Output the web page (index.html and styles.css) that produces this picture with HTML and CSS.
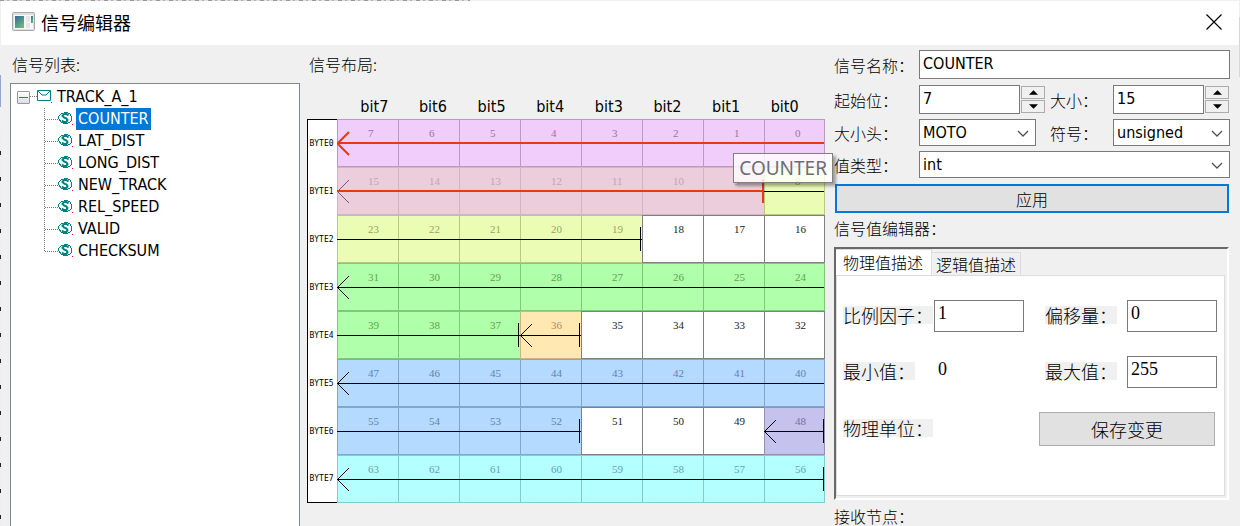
FILE: index.html
```html
<!DOCTYPE html>
<html lang="zh-CN">
<head>
<meta charset="utf-8">
<title>信号编辑器</title>
<link rel="stylesheet" href="styles.css">
</head>
<body>
<svg class="defs" aria-hidden="true">
  <symbol id="coin" viewBox="0 0 30 22"><path d="M1 11.500H14" class="dots"/><path d="M17 5.500h2M20 4.500h4M24 5.500h2M26.500 6v2M27.500 8v5M26.500 13v1M24 14.500h2M19 15.500h5M17 14.500h2M16.500 12v2M14.500 8v3M15.500 7v1M15.500 11v2M16.500 6v1" class="teal"/><path d="M24.500 7.500L22.500 6H20L18.500 8L20 9.500L22.500 10.500L23.500 12L22.500 14H19.500L18 12.500" class="teal bold"/><path d="M28 16h1v1h-1z" fill="#f00"/></symbol>
  <symbol id="sig" viewBox="0 0 30 22"><path d="M0.500 0V22" class="dots"/><use href="#coin" width="30" height="22"/></symbol>
  <symbol id="sig-last" viewBox="0 0 30 22"><path d="M0.500 0V12" class="dots"/><use href="#coin" width="30" height="22"/></symbol>
  <symbol id="head" viewBox="0 0 13 25"><path d="M12 1L0.500 12.500L12 24" fill="none" stroke="currentColor"/></symbol>
  <symbol id="chev" viewBox="0 0 12 8"><path d="M1 1L6 6L11 1" fill="none" stroke="#505050" stroke-width="1.300"/></symbol>
  <symbol id="up" viewBox="0 0 10 5"><path d="M0 5L5 0L10 5z"/></symbol>
  <symbol id="down" viewBox="0 0 10 5"><path d="M0 0L5 5L10 0z"/></symbol>
</svg>
<div class="window">
  <header class="titlebar">
    <svg class="app-icon" viewBox="0 0 24 20" aria-hidden="true"><defs><linearGradient id="g" x2="0.600" y2="1"><stop stop-color="#3468a0"/><stop offset="1" stop-color="#64b878"/></linearGradient></defs><rect x="0.500" y="0.500" width="22" height="18" rx="1" fill="#dedede" stroke="#a6aaae"/><path d="M2 3h19v14H2z" fill="#f7f7f7"/><path d="M3 4h9v12H3z" fill="url(#g)"/><path d="M14 4h4v6h-4zM14 11h4v5h-4z" fill="#e6e6e6"/><path d="M19 4h2v7h-2z" fill="url(#g)"/></svg>
    <h1>信号编辑器</h1>
    <button class="close" aria-label="关闭"><svg viewBox="0 0 16 16"><path d="M0.500 0.500L15.500 15.500M15.500 0.500L0.500 15.500" stroke="#000" stroke-width="1.200"/></svg></button>
  </header>
  <main>
    <section class="signals">
      <h2>信号列表:</h2>
      <div class="tree">
        <div class="root"><button class="toggle" aria-label="折叠"></button><svg class="root-icon" viewBox="0 0 22 16" aria-hidden="true"><path d="M0 7.500H7" class="dots"/><path d="M7.500 1.500h13v10h-13zM8 2l4 4h4l4 -4" class="teal"/><path d="M21 13h1v1h-1z" fill="#f00"/></svg><span>TRACK_A_1</span></div>
        <ul>
          <li><svg><use href="#sig"/></svg><span class="selected">COUNTER</span></li>
          <li><svg><use href="#sig"/></svg><span>LAT_DIST</span></li>
          <li><svg><use href="#sig"/></svg><span>LONG_DIST</span></li>
          <li><svg><use href="#sig"/></svg><span>NEW_TRACK</span></li>
          <li><svg><use href="#sig"/></svg><span>REL_SPEED</span></li>
          <li><svg><use href="#sig"/></svg><span>VALID</span></li>
          <li><svg><use href="#sig-last"/></svg><span>CHECKSUM</span></li>
        </ul>
      </div>
    </section>
    <section class="layout">
      <h2>信号布局:</h2>
      <div class="bits"><span>bit7</span><span>bit6</span><span>bit5</span><span>bit4</span><span>bit3</span><span>bit2</span><span>bit1</span><span>bit0</span></div>
      <div class="board">
        <table>
          <tbody>
          <tr class="active"><th scope="row">BYTE0</th><td class="pink">7<svg class="head"><use href="#head"/></svg></td><td class="pink">6</td><td class="pink">5</td><td class="pink">4</td><td class="pink">3</td><td class="pink">2</td><td class="pink">1</td><td class="pink">0</td></tr>
          <tr><th scope="row">BYTE1</th><td class="rose">15<svg class="head"><use href="#head"/></svg></td><td class="rose">14</td><td class="rose">13</td><td class="rose">12</td><td class="rose">11</td><td class="rose">10</td><td class="rose">9<i class="stop"></i></td><td class="lime">8</td></tr>
          <tr><th scope="row">BYTE2</th><td class="lime">23</td><td class="lime">22</td><td class="lime">21</td><td class="lime">20</td><td class="lime">19<i class="stop"></i></td><td>18</td><td>17</td><td>16</td></tr>
          <tr><th scope="row">BYTE3</th><td class="green">31<svg class="head"><use href="#head"/></svg></td><td class="green">30</td><td class="green">29</td><td class="green">28</td><td class="green">27</td><td class="green">26</td><td class="green">25</td><td class="green">24</td></tr>
          <tr><th scope="row">BYTE4</th><td class="green">39</td><td class="green">38</td><td class="green">37<i class="stop"></i></td><td class="amber">36<svg class="head"><use href="#head"/></svg><i class="stop"></i></td><td>35</td><td>34</td><td>33</td><td>32</td></tr>
          <tr><th scope="row">BYTE5</th><td class="blue">47<svg class="head"><use href="#head"/></svg></td><td class="blue">46</td><td class="blue">45</td><td class="blue">44</td><td class="blue">43</td><td class="blue">42</td><td class="blue">41</td><td class="blue">40</td></tr>
          <tr><th scope="row">BYTE6</th><td class="blue">55</td><td class="blue">54</td><td class="blue">53</td><td class="blue">52<i class="stop"></i></td><td>51</td><td>50</td><td>49</td><td class="violet">48<svg class="head"><use href="#head"/></svg><i class="stop"></i></td></tr>
          <tr><th scope="row">BYTE7</th><td class="cyan">63<svg class="head"><use href="#head"/></svg></td><td class="cyan">62</td><td class="cyan">61</td><td class="cyan">60</td><td class="cyan">59</td><td class="cyan">58</td><td class="cyan">57</td><td class="cyan">56<i class="stop"></i></td></tr>
          </tbody>
        </table>
        <div class="tooltip" role="tooltip">COUNTER</div>
      </div>
    </section>
    <section class="details">
      <form class="form">
        <label for="name">信号名称：</label>
        <input id="name" class="wide" value="COUNTER">
        <label for="start">起始位：</label>
        <div class="spin spaced"><input id="start" value="7"><div class="steps"><button type="button" aria-label="增加"><svg><use href="#up"/></svg></button><button type="button" aria-label="减少"><svg><use href="#down"/></svg></button></div></div>
        <label for="size">大小：</label>
        <div class="spin"><input id="size" value="15"><div class="steps"><button type="button" aria-label="增加"><svg><use href="#up"/></svg></button><button type="button" aria-label="减少"><svg><use href="#down"/></svg></button></div></div>
        <label for="endian">大小头：</label>
        <div class="combo inset"><select id="endian"><option>MOTO</option></select><svg><use href="#chev"/></svg></div>
        <label for="sign">符号：</label>
        <div class="combo"><select id="sign"><option>unsigned</option></select><svg><use href="#chev"/></svg></div>
        <label for="type">值类型：</label>
        <div class="combo wide"><select id="type"><option>int</option></select><svg><use href="#chev"/></svg></div>
        <button type="button" class="apply">应用</button>
      </form>
      <h2 class="editor-title">信号值编辑器：</h2>
      <div class="panel">
        <div class="tabs" role="tablist"><button role="tab" aria-selected="true">物理值描述</button><button role="tab" aria-selected="false">逻辑值描述</button></div>
        <div class="sheet">
          <label for="factor"><span>比例因子：</span></label><input id="factor" value="1">
          <label for="offset"><span>偏移量：</span></label><input id="offset" value="0">
          <label for="min"><span>最小值：</span></label><output id="min">0</output>
          <label for="max"><span>最大值：</span></label><input id="max" value="255">
          <label class="unit"><span>物理单位：</span></label>
          <button class="save">保存变更</button>
        </div>
      </div>
      <h2 class="nodes">接收节点：</h2>
    </section>
  </main>
</div>
</body>
</html>
```

FILE: styles.css
```css
* { box-sizing: border-box; }
html { height: 100%; background: #f0f0f0; }
body {
  margin: 0;
  height: 100%;
  overflow: hidden;
  padding: 1px 1px 0;
  color: #000;
  font: 16px/22px "DejaVu Sans Condensed", "Noto Sans", "Noto Sans CJK SC", sans-serif;
  background:
    repeating-linear-gradient(90deg, #999 0 4px, #ddd 4px 7px, #b8b0a8 7px 9px, #ddd 9px 13px) 0 0 / 470px 1px no-repeat,
    linear-gradient(#8fa8d0, #8fa8d0) 0 75px / 1px 32px no-repeat,
    repeating-linear-gradient(#eee 0 21px, #222 21px 25px, #eee 25px 26px) 0 130px / 1px 400px no-repeat,
    linear-gradient(#d8d8d8, #d8d8d8) 100% 17px / 1px 60px no-repeat,
    #f0f0f0;
}
button, input, select { font: inherit; color: inherit; margin: 0; border-radius: 0; min-width: 0; }
h1, h2 { margin: 0; font-weight: 300; }
h2 { font-size: 16px; line-height: 22px; }
h2, .form label, .apply, .tabs button { font-family: "Noto Sans CJK SC", sans-serif; font-weight: 300; }
.defs { position: absolute; width: 0; height: 0; }
.dots { fill: none; stroke: #777; stroke-dasharray: 1 1; }
.teal { fill: none; stroke: #008080; }
.bold { stroke-width: 2px; }

.window { min-height: 100%; background: #f0f0f0; }
.titlebar { display: flex; align-items: center; height: 44px; padding: 0 17px 2px 11px; background: #fff; }
.app-icon { width: 24px; height: 20px; margin-right: 5px; }
h1 { flex: 1; font: 400 18px/24px "Noto Sans CJK SC", sans-serif; }
.close { display: flex; padding: 0; border: 0; background: none; }
.close svg { width: 16px; height: 16px; }

main { display: grid; grid-template-columns: 290fr 518fr 398fr; gap: 7px; padding: 0 9px; }
section { min-width: 0; }

.signals { display: flex; flex-direction: column; }
.signals h2, .layout h2 { padding: 8px 2px; }
.tree { flex: 1; background: #fff; border: 1px solid #828790; border-bottom: 0; padding: 2px 0 0 6px; }
.root { display: flex; align-items: center; height: 22px; }
.root span { padding-left: 5px; }
.toggle { width: 13px; height: 13px; padding: 0; border: 1px solid #999; border-radius: 1px; background: linear-gradient(#4b63a7, #4b63a7) center / 9px 1px no-repeat, linear-gradient(#fff, #ddd); }
.root-icon { width: 22px; height: 16px; }
.tree ul { list-style: none; margin: 0; padding: 0 0 0 27px; }
.tree li { display: flex; align-items: center; height: 22px; }
.tree li svg { width: 30px; height: 22px; }
.tree li span { margin-left: 2px; padding: 0 2px; }
.tree .selected { background: #0078d7; color: #fff; }

.bits { display: flex; padding: 13px 11px 1px 38px; }
.bits span { flex: 1; text-align: center; }
.board { position: relative; }
table { width: 100%; table-layout: fixed; border-spacing: 0; border: 1px solid #000; border-width: 0 0 0 1px; font: 11px/11px "Liberation Serif", serif; }
th, td { height: 48px; padding: 0; text-align: left; }
th { width: 29px; background: #fff; font: 8px/11px "DejaVu Sans Mono", monospace; text-align: center; padding-right: 2px; }
tr:first-child th { border-top: 1px solid #000; }
tr:last-child th { border-bottom: 1px solid #000; }
td { --edge: #808080; --ink: #222; position: relative; vertical-align: top; padding: 8px 0 0 30px; background: #fff; color: var(--ink); border: 1px solid var(--edge); border-right: 0; }
td:last-child { border-right: 1px solid var(--edge); }
td[class]::after { content: ""; position: absolute; left: -1px; right: 0; top: 23px; height: 1px; background: #000; }
.pink { background: #f0cdfa; --edge: #ba9ac3; --ink: #9c72a8; }
.rose { background: #ebcddc; --edge: #d3b4c3; --ink: #c6a2b3; }
.lime { background: #ebfdb4; --edge: #b8ca82; --ink: #98a65f; }
.green { background: #b0ffaa; --edge: #7dca79; --ink: #5da357; }
.amber { background: #ffe8b2; --edge: #ccb67f; --ink: #b18d5c; }
.blue { background: #b4daff; --edge: #81a7cc; --ink: #6283ad; }
.violet { background: #c5c2ee; --edge: #9490ba; --ink: #7870a0; }
.cyan { background: #b4ffff; --edge: #81cccc; --ink: #63a5ab; }
td.pink::after, td.rose::after { top: 22px; height: 2px; background: #e83a10; }
.head { position: absolute; left: -1px; top: 11px; width: 13px; height: 25px; color: #000; z-index: 1; }
.pink .head { color: #e83a10; stroke-width: 2px; }
.rose .head { color: #75538b; z-index: 0; }
.stop { position: absolute; right: 1px; top: 11px; width: 1px; height: 24px; background: #000; }
td:last-child .stop { right: 0; }
.rose .stop { right: 0; width: 2px; background: #e83a10; }
.tooltip { position: absolute; right: -8px; top: 34px; z-index: 2; padding: 1px 5px; border: 1px solid #808080; background: rgba(255, 255, 255, .8); box-shadow: 3px 3px 3px rgba(0, 0, 0, .35); color: #6d6d78; font: 19px/26px "Noto Sans", sans-serif; }

.details { padding: 5px 0 0 2px; }
.form { display: grid; grid-template-columns: 85px 1fr 63px 117px; row-gap: 5px; align-items: center; }
.form input { width: 100%; height: 29px; padding: 0 3px 3px; border: 1px solid #7a7a7a; background: #fff; }
.wide { grid-column: 2 / -1; }
.form > input.wide { margin-bottom: 1px; }
.spin { display: flex; align-items: center; gap: 1px; padding-right: 1px; }
.spin input { flex: 1; }
.spaced { padding-right: 5px; }
.steps { display: flex; flex-direction: column; gap: 1px; width: 24px; }
.steps button { display: flex; align-items: center; justify-content: center; height: 13px; padding: 0; border: 1px solid #acacac; background: #f0f0f0; }
.steps svg { width: 9px; height: 5px; }
.combo { position: relative; display: flex; }
.combo select { width: 100%; height: 27px; appearance: none; border: 1px solid #7a7a7a; background: #fff; padding: 0 3px; }
.combo svg { position: absolute; right: 7px; top: 11px; width: 12px; height: 8px; pointer-events: none; }
.inset { margin-right: 14px; }
.apply { grid-column: 1 / -1; height: 29px; padding: 0; margin: 1px 1px 0; border: 2px solid #0078d7; background: #e1e1e1; }
.editor-title { padding: 4px 0 8px; }
.panel { border: 2px solid #e3e3e3; border-color: #696969 #fff #fff #696969; margin-right: 1px; padding: 0 2px 2px 0; }
.tabs { display: flex; align-items: flex-end; height: 26px; }
.tabs button { padding: 0 4px; line-height: 22px; height: 23px; border: 1px solid #dcdcdc; border-width: 1px 1px 0 0; background: #f0f0f0; }
.tabs [aria-selected="true"] { height: 26px; padding: 0 8px 2px 7px; background: #fff; }
.sheet { display: grid; grid-template-columns: 91px 1fr 82px 90px; grid-template-rows: 32px 32px 34px; row-gap: 24px; column-gap: 0; align-items: center; background: #fff; border: 1px solid #dcdcdc; padding: 24px 7px 49px 6px; font-family: "Noto Sans CJK SC", sans-serif; font-weight: 300; }
.sheet label span { display: inline-block; height: 18px; background: #f0f0f0; font-size: 18px; line-height: 18px; white-space: nowrap; }
.sheet input { width: 90px; height: 32px; padding: 0 3px 6px; border: 1px solid #7a7a7a; background: #fff; }
.sheet input, output { font: 18px/22px "Liberation Serif", serif; }
output { padding: 0 0 6px 4px; }
.save { grid-column: 3 / -1; margin: 0 2px 0 -6px; height: 34px; padding: 0; border: 1px solid #adadad; background: #e1e1e1; font-size: 18px; }
.unit { grid-column: 1 / 3; }
.nodes { padding-top: 5px; }
```
